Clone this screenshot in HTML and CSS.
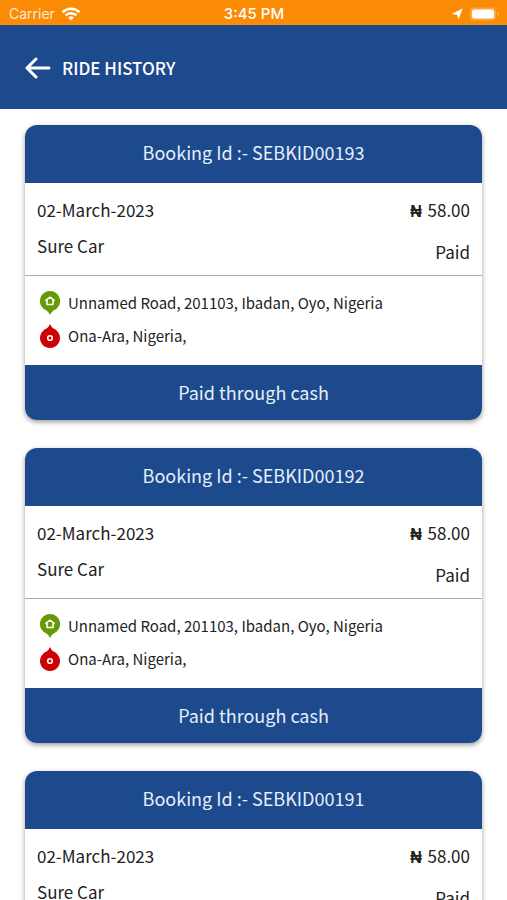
FILE: index.html
```
<!DOCTYPE html>
<html lang="en">
<head>
    <meta charset="UTF-8">
    <meta name="viewport" content="width=device-width, initial-scale=1.0">
    <title>Ride History</title>
    <link rel="stylesheet" href="styles.css">
</head>
<body>
    <!-- Icons shared by all the cards -->
    <svg class="symbols" aria-hidden="true">
        <symbol id="pickup" viewBox="0 0 22 26">
            <path d="M11 1a10 10 0 0 1 3.500 19.400Q12.500 21.500 11 25Q9.500 21.500 7.500 20.400A10 10 0 0 1 11 1z" fill="#639a05"/>
            <path d="M8 10.500v4h6v-4M6.800 10.300L11 7.200l4.200 3.100" fill="none" stroke="#fff" stroke-width="1.600" stroke-linejoin="round" stroke-linecap="round"/>
        </symbol>
        <symbol id="drop" viewBox="0 0 22 26">
            <path d="M11 1Q12.500 4.500 14.500 5.600A10 10 0 1 1 7.500 5.600Q9.500 4.500 11 1z" fill="#cc0205"/>
            <circle cx="11" cy="15" r="2.300" fill="none" stroke="#fff" stroke-width="1.600"/>
        </symbol>
    </svg>

    <div class="status-bar">
        <div class="carrier">
            <span>Carrier</span>
            <svg width="20" height="14" viewBox="0 0 20 14" fill="none" stroke="#fff" stroke-width="2.600">
                <path d="M1.500 5.200a12.200 12.200 0 0 1 17 0M4.600 8.400a7.800 7.800 0 0 1 10.800 0"/>
                <path d="M10 13.500L7.200 10.700a4 4 0 0 1 5.600 0z" fill="#fff" stroke="none"/>
            </svg>
        </div>
        <div class="time">3:45 PM</div>
        <div class="indicators">
            <svg width="12" height="12" viewBox="0 0 12 12" fill="#fff">
                <path d="M11.800 .6L7.500 11.600L6 6.800L.4 6z"/>
            </svg>
            <svg width="30" height="14" viewBox="0 0 30 14">
                <rect x="1" y=".5" width="26" height="13" rx="4" fill="#fff" fill-opacity=".25"/>
                <rect x="3" y="2.500" width="22" height="9" rx="2.500" fill="#fff"/>
                <path d="M28.300 5v4q1.500-.7 1.500-2t-1.500-2z" fill="#fff" fill-opacity=".4"/>
            </svg>
        </div>
    </div>

    <header class="header">
        <button class="back" aria-label="Back">
            <svg width="26" height="22" viewBox="0 0 26 22" fill="none" stroke="#fff" stroke-width="3" stroke-linecap="round" stroke-linejoin="round">
                <path d="M24 11H2M11 2L2 11l9 9"/>
            </svg>
        </button>
        <h1>RIDE HISTORY</h1>
    </header>

    <main class="rides">
        <article class="card">
            <h2>Booking Id :- SEBKID00193</h2>
            <div class="details">
                <div class="left">
                    <p>02-March-2023</p>
                    <p>Sure Car</p>
                </div>
                <div class="right">
                    <p><b>₦</b> 58.00</p>
                    <p>Paid</p>
                </div>
            </div>
            <div class="places">
                <p><svg width="22" height="26"><use href="#pickup"/></svg>Unnamed Road, 201103, Ibadan, Oyo, Nigeria</p>
                <p><svg width="22" height="26"><use href="#drop"/></svg>Ona-Ara, Nigeria,</p>
            </div>
            <div class="payment">Paid through cash</div>
        </article>

        <article class="card">
            <h2>Booking Id :- SEBKID00192</h2>
            <div class="details">
                <div class="left">
                    <p>02-March-2023</p>
                    <p>Sure Car</p>
                </div>
                <div class="right">
                    <p><b>₦</b> 58.00</p>
                    <p>Paid</p>
                </div>
            </div>
            <div class="places">
                <p><svg width="22" height="26"><use href="#pickup"/></svg>Unnamed Road, 201103, Ibadan, Oyo, Nigeria</p>
                <p><svg width="22" height="26"><use href="#drop"/></svg>Ona-Ara, Nigeria,</p>
            </div>
            <div class="payment">Paid through cash</div>
        </article>

        <article class="card">
            <h2>Booking Id :- SEBKID00191</h2>
            <div class="details">
                <div class="left">
                    <p>02-March-2023</p>
                    <p>Sure Car</p>
                </div>
                <div class="right">
                    <p><b>₦</b> 58.00</p>
                    <p>Paid</p>
                </div>
            </div>
            <div class="places">
                <p><svg width="22" height="26"><use href="#pickup"/></svg>Unnamed Road, 201103, Ibadan, Oyo, Nigeria</p>
                <p><svg width="22" height="26"><use href="#drop"/></svg>Ona-Ara, Nigeria,</p>
            </div>
            <div class="payment">Paid through cash</div>
        </article>
    </main>
</body>
</html>
```
FILE: styles.css
```
* {
    box-sizing: border-box;
}
body {
    margin: 0;
    background-color: #fff;
    color: #222;
    font-family: "Noto Sans CJK JP", "Noto Sans", sans-serif;
    font-size: 17px;
    line-height: 24px;
}
h1, h2, p {
    margin: 0;
}
svg {
    display: block;
    flex: none;
}
.symbols {
    position: absolute;
    width: 0;
    height: 0;
}
.status-bar {
    display: grid;
    grid-template-columns: 1fr auto 1fr;
    align-items: center;
    height: 25px;
    padding: 2px 8px 0 9px;
    background-color: #fb8a04;
    color: #fff;
    font-family: Inter, sans-serif;
    font-size: 14px;
}
.carrier, .indicators {
    display: flex;
    align-items: center;
    gap: 6px;
}
.carrier span {
    opacity: 0.8;
}
.indicators {
    justify-content: flex-end;
}
.time {
    font-size: 15px;
    font-weight: 500;
}
.header {
    display: flex;
    align-items: center;
    gap: 11px;
    height: 84px;
    padding: 2px 25px 0;
    background-color: #1c4a8d;
    color: #fff;
}
.header h1 {
    font-size: 17px;
    font-weight: 500;
}
.back {
    padding: 0;
    border: none;
    background: none;
    cursor: pointer;
}
.rides {
    display: grid;
    gap: 28px;
    padding: 16px 25px;
}
.card {
    overflow: hidden;
    border-radius: 12px;
    background-color: #fff;
    box-shadow: 0 2px 5px rgba(0, 0, 0, 0.4);
}
.card h2, .payment {
    background-color: #1c4a8d;
    color: #e6eefb;
    font-size: 18px;
    font-weight: 400;
    text-align: center;
}
.card h2 {
    padding: 15px 12px 19px;
}
.payment {
    padding: 15px 12px 16px;
}
.details {
    display: flex;
    justify-content: space-between;
    padding: 15px 12px;
    border-bottom: 1px solid #aaa;
}
.left, .right {
    display: flex;
    flex-direction: column;
    gap: 12px;
}
.right {
    gap: 18px;
    margin-bottom: -4px;
    text-align: right;
}
.right b {
    margin-right: 2px;
    font-family: "Liberation Sans", sans-serif;
    font-size: 16px;
    line-height: 1;
}
.places {
    padding: 14px 14px 16px;
    font-size: 15px;
}
.places p {
    display: flex;
    align-items: center;
    gap: 7px;
    height: 26px;
}
.places p + p {
    margin-top: 7px;
}
```
